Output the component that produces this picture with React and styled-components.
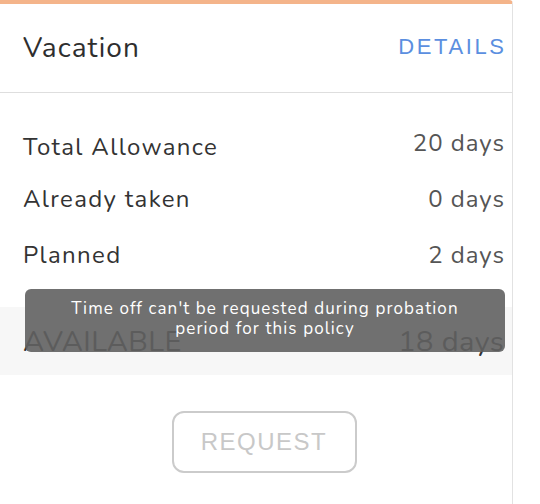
import React from 'react'
import styled, { createGlobalStyle } from 'styled-components'

const Global = createGlobalStyle`
  html, body {
    margin: 0;
    padding: 0;
    background: #fff;
  }
  body {
    font-family: 'Nunito', 'Lato', 'Open Sans', sans-serif;
    -webkit-font-smoothing: antialiased;
  }
`

const Card = styled.div`
  width: 513px;
  height: 504px;
  box-sizing: border-box;
  border-right: 1px solid #e2e2e2;
  border-top: 4px solid #f4b48a;
  border-top-right-radius: 4px;
  background: #fff;
  display: flex;
  flex-direction: column;
`

const Header = styled.div`
  height: 88px;
  display: flex;
  align-items: center;
  justify-content: space-between;
  padding: 0 8px 0 23px;
  border-bottom: 1px solid #dedede;
`

const Title = styled.h2`
  margin: 0;
  font-weight: 400;
  font-size: 28px;
  color: #2e2e2e;
  letter-spacing: 1.1px;
`

const DetailsLink = styled.a`
  font-family: 'Liberation Sans', 'Open Sans', sans-serif;
  font-size: 22px;
  color: #5b8fe0;
  letter-spacing: 2.6px;
  margin-right: -2.6px;
  margin-top: -2px;
`

const Stats = styled.div`
  padding: 27px 8px 25px 23px;
  display: flex;
  flex-direction: column;
`

const StatRow = styled.div`
  height: 54px;
  display: flex;
  align-items: center;
  justify-content: space-between;
  font-size: 24px;
`

const Label = styled.span`
  color: #333;
  letter-spacing: 1.35px;
  margin-top: ${p => p.$shift || 0}px;
`

const Value = styled.span`
  color: #555;
  letter-spacing: 1px;
  margin-right: -1px;
  margin-top: ${p => p.$shift || 0}px;
`

const AvailableWrap = styled.div`
  position: relative;
`

const AvailableRow = styled.div`
  height: 68px;
  background: #f7f7f7;
  display: flex;
  align-items: center;
  justify-content: space-between;
  padding: 0 8px 0 23px;
  font-size: 29px;
  letter-spacing: 0.4px;
  color: #333;
`

const AvailableValue = styled.span`
  color: #333;
`

const Tooltip = styled.div`
  position: absolute;
  left: 25px;
  top: -18px;
  width: 480px;
  height: 63px;
  box-sizing: border-box;
  padding: 10px 4px;
  border-radius: 6px;
  background: rgba(97, 97, 97, 0.9);
  color: #fff;
  font-size: 17px;
  line-height: 20px;
  text-align: center;
  letter-spacing: 1.1px;
`

const Footer = styled.div`
  flex: 1;
  display: flex;
  justify-content: center;
  padding: 36px 0 0 16px;
`

const RequestButton = styled.button`
  width: 185px;
  height: 62px;
  box-sizing: border-box;
  border: 2px solid #cbcbcb;
  border-radius: 12px;
  background: #fff;
  color: #c8c8c8;
  font-family: 'Liberation Sans', 'Open Sans', sans-serif;
  font-size: 24px;
  letter-spacing: 1.5px;
  cursor: not-allowed;
`

const stats = [
  { label: 'Total Allowance', value: '20 days', labelShift: 0, valueShift: -8 },
  { label: 'Already taken', value: '0 days', labelShift: -4, valueShift: -4 },
  { label: 'Planned', value: '2 days', labelShift: 0, valueShift: 0 },
]

export default function App() {
  return (
    <>
      <Global />
      <Card>
        <Header>
          <Title>Vacation</Title>
          <DetailsLink>DETAILS</DetailsLink>
        </Header>
        <Stats>
          {stats.map(s => (
            <StatRow key={s.label}>
              <Label $shift={s.labelShift}>{s.label}</Label>
              <Value $shift={s.valueShift}>{s.value}</Value>
            </StatRow>
          ))}
        </Stats>
        <AvailableWrap>
          <AvailableRow>
            <span>AVAILABLE</span>
            <AvailableValue>18 days</AvailableValue>
          </AvailableRow>
          <Tooltip>
            Time off can't be requested during probation
            <br />
            period for this policy
          </Tooltip>
        </AvailableWrap>
        <Footer>
          <RequestButton disabled>REQUEST</RequestButton>
        </Footer>
      </Card>
    </>
  )
}
